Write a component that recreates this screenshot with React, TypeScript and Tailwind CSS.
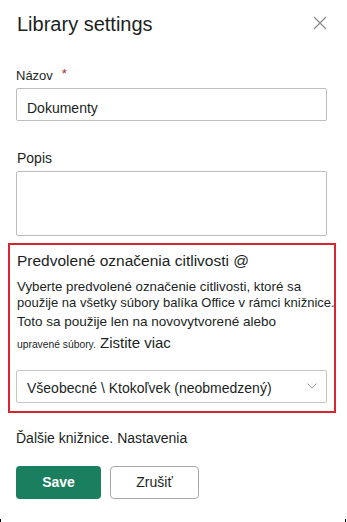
import React from 'react';

const CloseIcon = () => (
  <svg width="14" height="14" viewBox="0 0 14 14" fill="none" stroke="#8a8886" strokeWidth="1.2">
    <path d="M1 1 L13 13 M13 1 L1 13" />
  </svg>
);

const Chevron = () => (
  <svg width="10" height="6" viewBox="0 0 10 6" fill="none" stroke="#a6a6a6" strokeWidth="1">
    <path d="M0.5 0.5 L5 5 L9.5 0.5" />
  </svg>
);

export default function App() {
  return (
    <div className="relative w-[347px] h-[522px] bg-white text-[#201f1e] font-['Liberation_Sans',Arial,sans-serif] pl-[16px] pr-[20px] overflow-hidden">
      {/* Header */}
      <div className="flex justify-between items-start pt-[12px]">
        <h1 className="text-[20px] leading-[24px] ml-[1px]">Library settings</h1>
        <button className="mt-[4px]">
          <CloseIcon />
        </button>
      </div>

      {/* Name */}
      <div className="mt-[31px] text-[13px] leading-[18px] flex items-start">
        <span>Názov</span>
        <span className="ml-[9px] text-[#a4262c] text-[13px] leading-[14px]">*</span>
      </div>
      <div className="mt-[3px] h-[33px] border border-[#bdbdbd] rounded-[2px] pl-[10px] pt-[9px] text-[14px] leading-[20px]">
        Dokumenty
      </div>

      {/* Description */}
      <div className="mt-[27px] text-[14px] leading-[20px] ml-[1px]">Popis</div>
      <div className="mt-[3px] h-[65px] border border-[#bdbdbd] rounded-[2px]" />

      {/* Sensitivity label */}
      <div className="mt-[7px] ml-[-8px] mr-[-9px] border-2 border-[#d7262f] pl-[6px] pr-[7px] pt-[6px] pb-[8px]">
        <div className="text-[15.5px] leading-[20px] ml-[1px]">Predvolené označenia citlivosti @</div>
        <div className="mt-[7px] text-[13.3px] leading-[18px] ml-[1px] whitespace-nowrap">
          Vyberte predvolené označenie citlivosti, ktoré sa
        </div>
        <div className="text-[13px] leading-[14px] ml-[1px] whitespace-nowrap">
          použije na všetky súbory balíka Office v rámci knižnice.
        </div>
        <div className="mt-[2px] text-[13.5px] leading-[20px] ml-[1px] whitespace-nowrap">
          Toto sa použije len na novovytvorené alebo
        </div>
        <div className="mt-[1px] text-[15px] leading-[20px] ml-[1px] whitespace-nowrap">
          <span className="text-[10.3px] leading-none">upravené súbory.</span> Zistite viac
        </div>
        <div className="mt-[17px] h-[33px] border border-[#c8c6c4] rounded-[2px] pl-[10px] pr-[9px] pt-[7px] flex justify-between items-start text-[14px] leading-[20px]">
          <span>Všeobecné \ Ktokoľvek (neobmedzený)</span>
          <span className="mt-[5px]">
            <Chevron />
          </span>
        </div>
      </div>

      {/* Other settings */}
      <div className="mt-[15px] text-[14px] leading-[20px]">Ďalšie knižnice. Nastavenia</div>

      {/* Actions */}
      <div className="mt-[18px] flex gap-[9px]">
        <button className="w-[85px] h-[33px] rounded-[4px] bg-[#1a7f5f] text-white font-bold text-[14px]">
          Save
        </button>
        <button className="w-[89px] h-[33px] rounded-[4px] border border-[#a8a8a8] bg-white text-[14px]">
          Zrušiť
        </button>
      </div>

      {/* selection corner marks */}
      <div className="absolute left-0 bottom-0 w-[1px] h-[3px] bg-black" />
      <div className="absolute right-[1px] bottom-0 w-[1px] h-[3px] bg-black" />
    </div>
  );
}
